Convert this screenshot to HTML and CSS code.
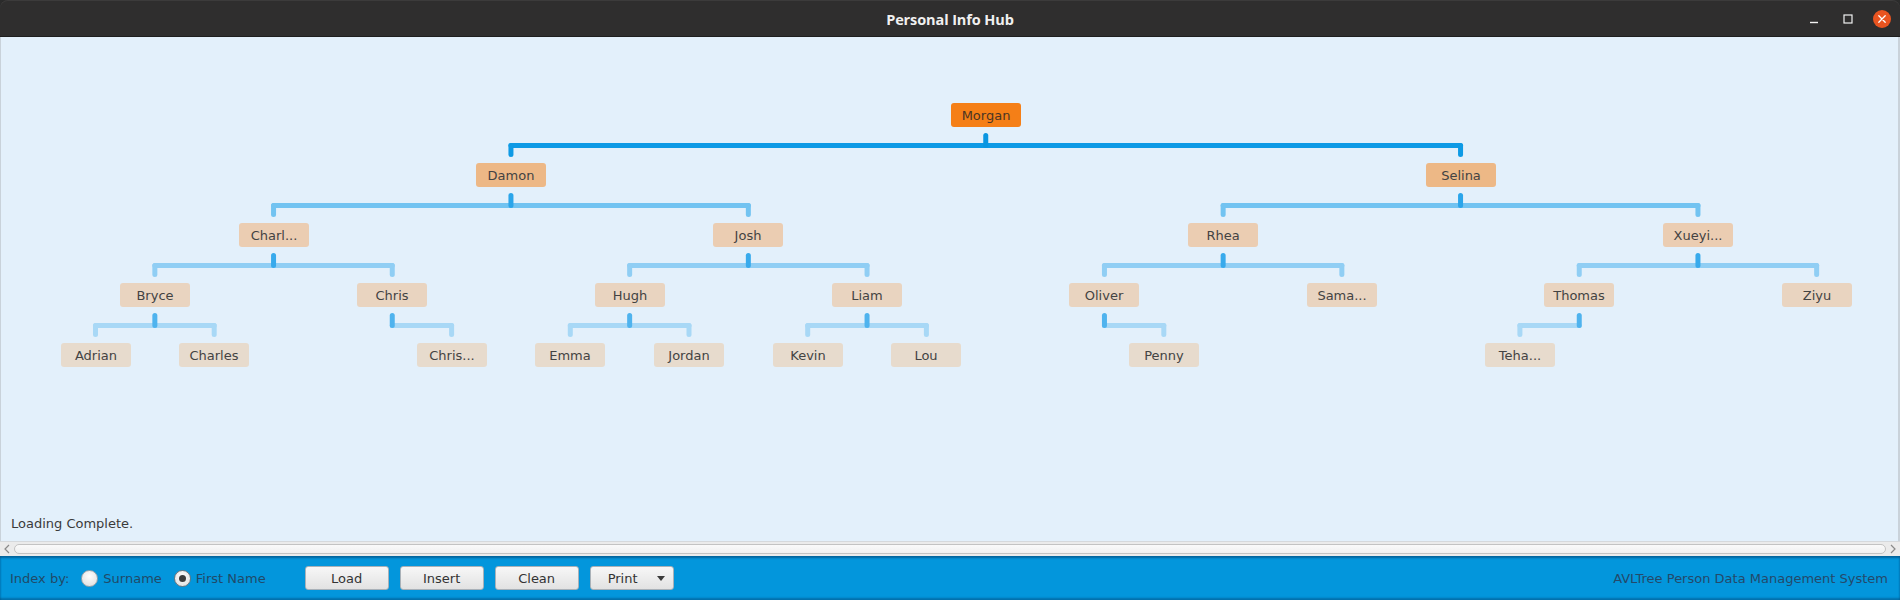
FILE: index.html
```html
<!DOCTYPE html>
<html lang="en">
<head>
<meta charset="utf-8">
<title>Personal Info Hub</title>
<link rel="stylesheet" href="styles.css">
</head>
<body>
<div class="window">
  <header class="titlebar">
    <span class="title">Personal Info Hub</span>
    <div class="controls">
      <svg class="ctl-min" width="10" height="10" viewBox="0 0 10 10"><line x1="1" y1="7.5" x2="9" y2="7.5" stroke="#f2f2f2" stroke-width="1.4"/></svg>
      <svg class="ctl-max" width="10" height="10" viewBox="0 0 10 10"><rect x="1" y="1" width="8" height="8" fill="none" stroke="#f2f2f2" stroke-width="1.2"/></svg>
      <svg class="ctl-close" width="18" height="18" viewBox="0 0 18 18"><circle cx="9" cy="9" r="9" fill="#e95420"/><path d="M5.8 5.8 L12.2 12.2 M12.2 5.8 L5.8 12.2" stroke="#fff" stroke-width="1.3" stroke-linecap="round"/></svg>
    </div>
  </header>

  <main class="canvas">
    <div class="tree">
      <svg class="links" width="1900" height="340" viewBox="0 0 1900 340">
        <g class="bar b0">
          <line x1="510.95" y1="108.5" x2="1460.55" y2="108.5"/>
          <line x1="510.95" y1="108.5" x2="510.95" y2="117.5"/>
          <line x1="1460.55" y1="108.5" x2="1460.55" y2="117.5"/>
        </g>
        <g class="bar b1">
          <line x1="273.55" y1="168.5" x2="748.35" y2="168.5"/>
          <line x1="273.55" y1="168.5" x2="273.55" y2="177.5"/>
          <line x1="748.35" y1="168.5" x2="748.35" y2="177.5"/>
          <line x1="1223.15" y1="168.5" x2="1697.95" y2="168.5"/>
          <line x1="1223.15" y1="168.5" x2="1223.15" y2="177.5"/>
          <line x1="1697.95" y1="168.5" x2="1697.95" y2="177.5"/>
        </g>
        <g class="bar b2">
          <line x1="154.85" y1="228.5" x2="392.25" y2="228.5"/>
          <line x1="154.85" y1="228.5" x2="154.85" y2="237.5"/>
          <line x1="392.25" y1="228.5" x2="392.25" y2="237.5"/>
          <line x1="629.65" y1="228.5" x2="867.05" y2="228.5"/>
          <line x1="629.65" y1="228.5" x2="629.65" y2="237.5"/>
          <line x1="867.05" y1="228.5" x2="867.05" y2="237.5"/>
          <line x1="1104.45" y1="228.5" x2="1341.85" y2="228.5"/>
          <line x1="1104.45" y1="228.5" x2="1104.45" y2="237.5"/>
          <line x1="1341.85" y1="228.5" x2="1341.85" y2="237.5"/>
          <line x1="1579.25" y1="228.5" x2="1816.65" y2="228.5"/>
          <line x1="1579.25" y1="228.5" x2="1579.25" y2="237.5"/>
          <line x1="1816.65" y1="228.5" x2="1816.65" y2="237.5"/>
        </g>
        <g class="bar b3">
          <line x1="95.5" y1="288.5" x2="214.2" y2="288.5"/>
          <line x1="95.5" y1="288.5" x2="95.5" y2="297.5"/>
          <line x1="214.2" y1="288.5" x2="214.2" y2="297.5"/>
          <line x1="392.25" y1="288.5" x2="451.6" y2="288.5"/>
          <line x1="451.6" y1="288.5" x2="451.6" y2="297.5"/>
          <line x1="570.3" y1="288.5" x2="689" y2="288.5"/>
          <line x1="570.3" y1="288.5" x2="570.3" y2="297.5"/>
          <line x1="689" y1="288.5" x2="689" y2="297.5"/>
          <line x1="807.7" y1="288.5" x2="926.4" y2="288.5"/>
          <line x1="807.7" y1="288.5" x2="807.7" y2="297.5"/>
          <line x1="926.4" y1="288.5" x2="926.4" y2="297.5"/>
          <line x1="1104.45" y1="288.5" x2="1163.8" y2="288.5"/>
          <line x1="1163.8" y1="288.5" x2="1163.8" y2="297.5"/>
          <line x1="1519.9" y1="288.5" x2="1579.25" y2="288.5"/>
          <line x1="1519.9" y1="288.5" x2="1519.9" y2="297.5"/>
        </g>
        <g class="tick t0">
          <line x1="985.75" y1="98.5" x2="985.75" y2="108.5"/>
        </g>
        <g class="tick t1">
          <line x1="510.95" y1="158.5" x2="510.95" y2="168.5"/>
          <line x1="1460.55" y1="158.5" x2="1460.55" y2="168.5"/>
        </g>
        <g class="tick t2">
          <line x1="273.55" y1="218.5" x2="273.55" y2="228.5"/>
          <line x1="748.35" y1="218.5" x2="748.35" y2="228.5"/>
          <line x1="1223.15" y1="218.5" x2="1223.15" y2="228.5"/>
          <line x1="1697.95" y1="218.5" x2="1697.95" y2="228.5"/>
        </g>
        <g class="tick t3">
          <line x1="154.85" y1="278.5" x2="154.85" y2="288.5"/>
          <line x1="392.25" y1="278.5" x2="392.25" y2="288.5"/>
          <line x1="629.65" y1="278.5" x2="629.65" y2="288.5"/>
          <line x1="867.05" y1="278.5" x2="867.05" y2="288.5"/>
          <line x1="1104.45" y1="278.5" x2="1104.45" y2="288.5"/>
          <line x1="1579.25" y1="278.5" x2="1579.25" y2="288.5"/>
        </g>
      </svg>

      <div class="node d0" style="left:951px;top:66px">Morgan</div>

      <div class="node d1" style="left:476px;top:126px">Damon</div>
      <div class="node d1" style="left:1426px;top:126px">Selina</div>

      <div class="node d2" style="left:239px;top:186px">Charl...</div>
      <div class="node d2" style="left:713px;top:186px">Josh</div>
      <div class="node d2" style="left:1188px;top:186px">Rhea</div>
      <div class="node d2" style="left:1663px;top:186px">Xueyi...</div>

      <div class="node d3" style="left:120px;top:246px">Bryce</div>
      <div class="node d3" style="left:357px;top:246px">Chris</div>
      <div class="node d3" style="left:595px;top:246px">Hugh</div>
      <div class="node d3" style="left:832px;top:246px">Liam</div>
      <div class="node d3" style="left:1069px;top:246px">Oliver</div>
      <div class="node d3" style="left:1307px;top:246px">Sama...</div>
      <div class="node d3" style="left:1544px;top:246px">Thomas</div>
      <div class="node d3" style="left:1782px;top:246px">Ziyu</div>

      <div class="node d4" style="left:61px;top:306px">Adrian</div>
      <div class="node d4" style="left:179px;top:306px">Charles</div>
      <div class="node d4" style="left:417px;top:306px">Chris...</div>
      <div class="node d4" style="left:535px;top:306px">Emma</div>
      <div class="node d4" style="left:654px;top:306px">Jordan</div>
      <div class="node d4" style="left:773px;top:306px">Kevin</div>
      <div class="node d4" style="left:891px;top:306px">Lou</div>
      <div class="node d4" style="left:1129px;top:306px">Penny</div>
      <div class="node d4" style="left:1485px;top:306px">Teha...</div>
    </div>
    <div class="status">Loading Complete.</div>
  </main>

  <div class="hscroll">
    <svg class="sarrow" width="8" height="10" viewBox="0 0 8 10"><path d="M6 1 L2 5 L6 9" fill="none" stroke="#8a8a8a" stroke-width="1.2"/></svg>
    <div class="track"></div>
    <svg class="sarrow" width="8" height="10" viewBox="0 0 8 10"><path d="M2 1 L6 5 L2 9" fill="none" stroke="#8a8a8a" stroke-width="1.2"/></svg>
  </div>

  <footer class="toolbar">
    <div class="indexby">
      <span class="label">Index by:</span>
      <label class="radio"><span class="dot"></span>Surname</label>
      <label class="radio checked"><span class="dot"></span>First Name</label>
    </div>
    <div class="buttons">
      <button class="btn">Load</button>
      <button class="btn">Insert</button>
      <button class="btn">Clean</button>
      <button class="btn split"><span class="btn-text">Print</span><span class="caret"></span></button>
    </div>
    <span class="sysname">AVLTree Person Data Management System</span>
  </footer>
</div>
</body>
</html>
```

FILE: styles.css
```css
* { box-sizing: border-box; }

html, body {
  margin: 0;
  padding: 0;
  background: #2b2b2b;
}

body {
  width: 1900px;
  height: 600px;
  overflow: hidden;
  font-family: "DejaVu Sans", "Noto Sans", sans-serif;
  font-size: 13px;
}

.window {
  width: 1900px;
  height: 600px;
  display: flex;
  flex-direction: column;
}

/* ---------- title bar ---------- */
.titlebar {
  height: 37px;
  flex: 0 0 37px;
  display: grid;
  grid-template-columns: 1fr auto 1fr;
  align-items: center;
  background: #2f2e2e;
  border-radius: 8px 8px 0 0;
  box-shadow: inset 0 1px 0 #3c3b3b, inset 0 -1px 0 #1e1e1e;
}

.title {
  grid-column: 2;
  font-family: "Open Sans", "DejaVu Sans", sans-serif;
  font-weight: 700;
  font-size: 14.5px;
  color: #f0f0f0;
  letter-spacing: -0.1px;
  padding-top: 1px;
}

.controls {
  grid-column: 3;
  justify-self: end;
  display: flex;
  align-items: center;
  padding-right: 9px;
}

.ctl-min { margin-right: 24px; margin-top: 2px; }
.ctl-max { margin-right: 20px; }
.ctl-close { display: block; }

/* ---------- canvas ---------- */
.canvas {
  flex: 1 1 auto;
  display: flex;
  flex-direction: column;
  background: #e3f0fb;
  box-shadow: inset 1px 0 0 #c9d2da, inset -2px 0 0 #c9d2da;
  position: relative;
}

.tree {
  flex: 1 1 auto;
  position: relative;
}

.links {
  position: absolute;
  left: 0;
  top: 0;
}

.links line {
  stroke-width: 5;
  stroke-linecap: round;
}

.b0 line { stroke: #0e9ae5; }
.b1 line { stroke: #72c3f1; }
.b2 line { stroke: #90cef4; }
.b3 line { stroke: #a8d8f6; }

.t0 line { stroke: #0b96e1; }
.t1 line { stroke: #2ba5ea; }
.t2 line { stroke: #38aaec; }
.t3 line { stroke: #4fb3ee; }

.node {
  position: absolute;
  width: 70px;
  height: 24px;
  border-radius: 3px;
  display: flex;
  align-items: center;
  justify-content: center;
  color: #434343;
  font-size: 13px;
  white-space: nowrap;
}

.d0 { background: #f57f17; color: #4a3524; }
.d1 { background: #edb886; }
.d2 { background: #ebcdb2; }
.d3 { background: #e9d4c0; }
.d4 { background: #e7dbcd; }

.status {
  padding: 0 0 9px 11px;
  line-height: 16px;
  color: #3a3a3a;
}

/* ---------- horizontal scrollbar ---------- */
.hscroll {
  flex: 0 0 15px;
  height: 15px;
  display: flex;
  align-items: center;
  gap: 3px;
  padding: 0 3px 0 3px;
  background: #ebebeb;
  border-top: 1px solid #d6d9dc;
}

.sarrow { flex: 0 0 8px; }

.track {
  flex: 1 1 auto;
  height: 10px;
  border: 1px solid #c3c3c3;
  border-radius: 5px;
  background: linear-gradient(#fafafa, #f0f0f0);
}

/* ---------- toolbar ---------- */
.toolbar {
  flex: 0 0 44px;
  height: 44px;
  display: flex;
  align-items: center;
  padding: 0 12px 0 10px;
  background: #0396dc;
  box-shadow: inset 0 2px 2px rgba(0, 40, 80, 0.45), inset 0 -2px 2px rgba(0, 40, 80, 0.35);
  color: #204a68;
}

.indexby {
  display: flex;
  align-items: center;
}

.label { margin-right: 12px; }

.radio {
  display: flex;
  align-items: center;
  gap: 5px;
  margin-right: 12px;
}

.radio .dot {
  width: 17px;
  height: 17px;
  border-radius: 50%;
  border: 1px solid #9aa3aa;
  background: radial-gradient(circle at 50% 35%, #fdfdfd, #dcdcdc);
  position: relative;
}

.radio.checked .dot {
  border-color: #6f767c;
}

.radio.checked .dot::after {
  content: "";
  position: absolute;
  left: 4px;
  top: 4px;
  width: 7px;
  height: 7px;
  border-radius: 50%;
  background: #3c3c3c;
}

.buttons {
  display: flex;
  gap: 11px;
  margin-left: 27px;
}

.btn {
  width: 84px;
  height: 24px;
  border: 1px solid #a9b1b8;
  border-radius: 3px;
  background: linear-gradient(#f7f7f7, #e2e2e2);
  font-family: "DejaVu Sans", "Noto Sans", sans-serif;
  font-size: 13px;
  color: #333;
  padding: 0;
  display: flex;
  align-items: center;
  justify-content: center;
}

.btn.split {
  justify-content: flex-start;
  padding-left: 17px;
}

.btn.split .btn-text { flex: 1 1 auto; text-align: left; }

.caret {
  width: 0;
  height: 0;
  border-left: 4px solid transparent;
  border-right: 4px solid transparent;
  border-top: 5px solid #3a3a3a;
  margin-right: 8px;
}

.sysname {
  margin-left: auto;
  color: #24496a;
}
```
